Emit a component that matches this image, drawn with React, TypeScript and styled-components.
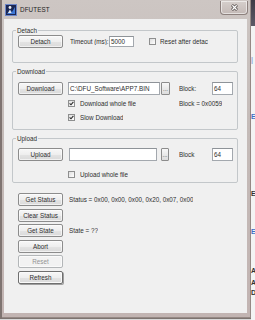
import styled, { createGlobalStyle } from "styled-components";

const GlobalStyle = createGlobalStyle`
  html, body { margin: 0; padding: 0; }
  body {
    width: 255px;
    height: 320px;
    overflow: hidden;
    background: #dcdcdc;
    font-family: "Liberation Sans", Arial, sans-serif;
    color: #2e2e2e;
  }
  * { box-sizing: border-box; }
`;

const Screen = styled.div`
  display: grid;
  grid-template-columns: 251px 4px;
  grid-template-rows: 318px 2px;
  width: 255px;
  height: 320px;
  overflow: hidden;
`;

const Window = styled.div`
  grid-column: 1;
  grid-row: 1;
  display: flex;
  flex-direction: column;
  padding: 0 4px 5px 2px;
  border-left: 2px solid #7f7471;
  background: linear-gradient(180deg, #cdc6c3 0%, #c4bbb8 40%, #c2b4b2 100%);
  box-shadow: inset -1px -1px 0 #968985;
`;

const TitleBar = styled.div`
  display: flex;
  align-items: center;
  height: 19px;
  padding: 1px 0 0 1px;
`;

const Title = styled.span`
  margin-left: 3px;
  font-size: 6.3px;
  line-height: 8px;
  color: #242424;
  letter-spacing: 0.1px;
`;

const CloseButton = styled.div`
  align-self: flex-start;
  display: flex;
  align-items: center;
  justify-content: center;
  width: 28px;
  height: 14px;
  margin: 0 -1px 0 auto;
  border: 1px solid #8c807d;
  border-top: none;
  border-radius: 0 0 4px 4px;
  background: linear-gradient(180deg, #d6cfcc, #c3b9b6);
  box-shadow: inset 0 0 0 1px rgba(255, 255, 255, 0.55);
`;

const Client = styled.div`
  flex: 1;
  display: flex;
  flex-direction: column;
  padding: 8px 9px 0 8px;
  background: #f0f0f0;
`;

const Group = styled.fieldset<{ $pt: number; $pb: number; $mt: number }>`
  width: 226px;
  min-width: 0;
  margin: ${(p) => p.$mt}px 0 0 0;
  padding: ${(p) => p.$pt}px 4px ${(p) => p.$pb}px 5px;
  border: 1px solid #c3c7ca;
  border-radius: 2px;
  display: flex;
  flex-direction: column;
`;

const Legend = styled.legend`
  margin-left: -2px;
  padding: 0 1px;
  font-size: 6.3px;
  line-height: 7px;
  color: #2e2e2e;
`;

const Row = styled.div<{ $h: number; $mt?: number }>`
  display: flex;
  align-items: center;
  height: ${(p) => p.$h}px;
  margin-top: ${(p) => p.$mt ?? 0}px;
  font-size: 6.3px;
  white-space: nowrap;
`;

const Button = styled.div<{ $disabled?: boolean; $default?: boolean }>`
  flex: none;
  display: flex;
  align-items: center;
  justify-content: center;
  width: 45px;
  height: 13px;
  font-size: 6.3px;
  color: ${(p) => (p.$disabled ? "#939393" : "#2e2e2e")};
  border: 1px solid ${(p) => (p.$disabled ? "#b3b6b8" : p.$default ? "#6f6f6f" : "#8c8c8c")};
  border-radius: 2px;
  background: ${(p) =>
    p.$disabled
      ? "#f2f2f2"
      : "linear-gradient(180deg, #f7f7f7 0%, #eeeeee 50%, #e3e3e3 52%, #dadada 100%)"};
  box-shadow: ${(p) =>
    p.$default ? "inset 0 0 0 1px #fafafa, 1px 1px 0 #a0a0a0" : "inset 0 0 0 1px rgba(255,255,255,0.6)"};
  margin-right: 5px;
`;

const TextBox = styled.div<{ $w: number; $h?: number; $mr?: number }>`
  flex: none;
  width: ${(p) => p.$w}px;
  height: ${(p) => p.$h ?? 13}px;
  margin-right: ${(p) => p.$mr ?? 0}px;
  padding: 0 1px;
  display: flex;
  align-items: center;
  overflow: hidden;
  background: #fff;
  border: 1px solid #a3a8ae;
  border-top-color: #8e9398;
  font-size: 6.3px;
  color: #2e2e2e;
`;

const Browse = styled.div<{ $w: number; $mr: number }>`
  flex: none;
  width: ${(p) => p.$w}px;
  height: 13px;
  margin-right: ${(p) => p.$mr}px;
  display: flex;
  align-items: flex-end;
  justify-content: center;
  padding-bottom: 2px;
  font-size: 6px;
  line-height: 5px;
  border: 1px solid #8c8c8c;
  border-radius: 1px;
  background: linear-gradient(180deg, #f7f7f7, #dcdcdc);
`;

const Label = styled.span<{ $w?: number; $ml?: number }>`
  flex: none;
  width: ${(p) => (p.$w ? `${p.$w}px` : "auto")};
  margin-left: ${(p) => p.$ml ?? 0}px;
  font-size: 6.3px;
  color: #2e2e2e;
  overflow: hidden;
`;

const CheckCell = styled.div<{ $w: number; $ml: number; $gap?: number }>`
  flex: none;
  display: flex;
  align-items: center;
  gap: ${(p) => p.$gap ?? 5}px;
  width: ${(p) => p.$w}px;
  margin-left: ${(p) => p.$ml}px;
  overflow: hidden;
`;

const Box = styled.div`
  flex: none;
  width: 7px;
  height: 7px;
  border: 1px solid #8e8f8f;
  background: linear-gradient(135deg, #dedede, #ffffff);
  display: flex;
  align-items: center;
  justify-content: center;
`;

const Actions = styled.div`
  display: flex;
  flex-direction: column;
  gap: 2.6px;
  margin: 10px 0 0 6px;
`;

const ActionRow = styled.div`
  display: flex;
  align-items: center;
  height: 13px;
  font-size: 6.3px;
  white-space: nowrap;
`;

const DesktopStrip = styled.div`
  grid-column: 2;
  grid-row: 1 / span 2;
  display: flex;
  flex-direction: column;
  overflow: hidden;
  background: #f4f4f4;
`;

const DarkCap = styled.div`
  flex: none;
  height: 26px;
  background: linear-gradient(180deg, #3f3b46, #5d5966);
`;

const Glyph = styled.span<{ $mt: number; $c: string }>`
  display: block;
  margin-top: ${(p) => p.$mt}px;
  font-size: 7px;
  line-height: 7px;
  font-weight: bold;
  color: ${(p) => p.$c};
`;

const BottomStrip = styled.div`
  grid-column: 1;
  grid-row: 2;
  background: #d9d9d9;
  border-top: 1px solid #7d7370;
`;

const Check = ({ checked }: { checked?: boolean }) => (
  <Box>
    {checked && (
      <svg width="5" height="5" viewBox="0 0 5 5">
        <path d="M0.6 2.4 L2 3.8 L4.4 0.8" fill="none" stroke="#2b2b2b" strokeWidth="1.1" />
      </svg>
    )}
  </Box>
);

const AppIcon = () => (
  <svg width="12" height="12" viewBox="0 0 12 12">
    <rect x="0" y="0" width="12" height="12" fill="#1b2754" />
    <rect x="0.5" y="0.5" width="11" height="11" fill="none" stroke="#6c86c8" strokeWidth="1" />
    <path d="M2 10 L5 6 L7 8 L10 3 L10 10 Z" fill="#3f78d6" />
    <circle cx="5" cy="3.5" r="1.4" fill="#f2f2f2" />
    <path d="M3 9 L5 5.5 L6.5 9 Z" fill="#e8e8e8" />
  </svg>
);

const CloseGlyph = () => (
  <svg width="7" height="7" viewBox="0 0 7 7">
    <path d="M1 1 L6 6 M6 1 L1 6" stroke="#4a4240" strokeWidth="2.6" />
    <path d="M1.3 1.3 L5.7 5.7 M5.7 1.3 L1.3 5.7" stroke="#ffffff" strokeWidth="1.3" />
  </svg>
);

export default function App() {
  return (
    <>
      <GlobalStyle />
      <Screen>
        <Window>
          <TitleBar>
            <AppIcon />
            <Title>DFUTEST</Title>
            <CloseButton>
              <CloseGlyph />
            </CloseButton>
          </TitleBar>
          <Client>
            <Group $mt={0} $pt={1} $pb={14}>
              <Legend>Detach</Legend>
              <Row $h={13}>
                <Button style={{ marginRight: 7 }}>Detach</Button>
                <Label $w={39}>Timeout (ms):</Label>
                <TextBox $w={25} $h={11} $mr={15}>
                  5000
                </TextBox>
                <CheckCell $w={59} $ml={0} $gap={4}>
                  <Check />
                  <Label>Reset after detach</Label>
                </CheckCell>
              </Row>
            </Group>

            <Group $mt={5} $pt={7} $pb={7}>
              <Legend>Download</Legend>
              <Row $h={13}>
                <Button>Download</Button>
                <TextBox $w={92} $mr={1}>
                  C:\DFU_Software\APP7.BIN
                </TextBox>
                <Browse $w={9} $mr={9}>
                  ...
                </Browse>
                <Label $w={33}>Block:</Label>
                <TextBox $w={21}>64</TextBox>
              </Row>
              <Row $h={10} $mt={3}>
                <CheckCell $w={111} $ml={50}>
                  <Check checked />
                  <Label>Download whole file</Label>
                </CheckCell>
                <Label>Block = 0x0059</Label>
              </Row>
              <Row $h={10} $mt={4}>
                <CheckCell $w={111} $ml={50}>
                  <Check checked />
                  <Label>Slow Download</Label>
                </CheckCell>
              </Row>
            </Group>

            <Group $mt={5} $pt={6} $pb={3}>
              <Legend>Upload</Legend>
              <Row $h={13}>
                <Button style={{ marginRight: 6 }}>Upload</Button>
                <TextBox $w={88} $mr={4} />
                <Browse $w={8} $mr={10}>
                  ...
                </Browse>
                <Label $w={33}>Block</Label>
                <TextBox $w={21}>64</TextBox>
              </Row>
              <Row $h={10} $mt={8}>
                <CheckCell $w={111} $ml={50}>
                  <Check />
                  <Label>Upload whole file</Label>
                </CheckCell>
              </Row>
            </Group>

            <Actions>
              <ActionRow>
                <Button style={{ marginRight: 6 }}>Get Status</Button>
                <Label>Status = 0x00, 0x00, 0x00, 0x20, 0x07, 0x00</Label>
              </ActionRow>
              <ActionRow>
                <Button>Clear Status</Button>
              </ActionRow>
              <ActionRow>
                <Button style={{ marginRight: 6 }}>Get State</Button>
                <Label>State = ??</Label>
              </ActionRow>
              <ActionRow>
                <Button>Abort</Button>
              </ActionRow>
              <ActionRow>
                <Button $disabled>Reset</Button>
              </ActionRow>
              <ActionRow>
                <Button $default>Refresh</Button>
              </ActionRow>
            </Actions>
          </Client>
        </Window>
        <DesktopStrip>
          <DarkCap />
          <Glyph $mt={30} $c="#8aa4d8">
            |
          </Glyph>
          <Glyph $mt={50} $c="#3d6fc4">
            E
          </Glyph>
          <Glyph $mt={70} $c="#333">
            E
          </Glyph>
          <Glyph $mt={31} $c="#3d6fc4">
            E
          </Glyph>
          <Glyph $mt={32} $c="#333">
            A
          </Glyph>
          <Glyph $mt={5} $c="#333">
            A
          </Glyph>
          <Glyph $mt={3} $c="#333">
            D
          </Glyph>
        </DesktopStrip>
        <BottomStrip />
      </Screen>
    </>
  );
}
